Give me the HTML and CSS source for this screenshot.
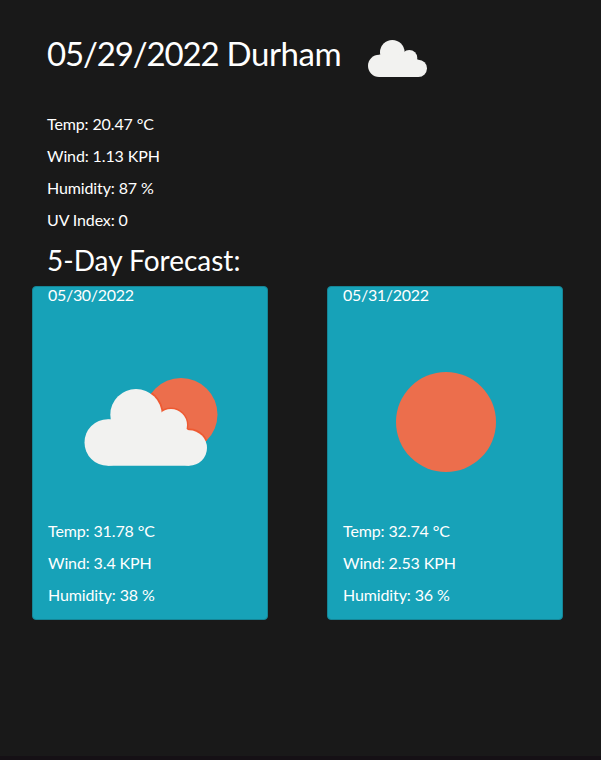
FILE: index.html
```html
<!DOCTYPE html>
<html lang="en">
<head>
<meta charset="utf-8">
<title>Weather</title>
<link rel="stylesheet" href="styles.css">
</head>
<body>
<main class="page">
  <section class="current">
    <header class="heading">
      <h1><span class="date">05/29/2022</span> Durham</h1>
      <svg class="cloud" viewBox="0 0 59 37" fill="#f2f2f0"><circle cx="11.100" cy="25.800" r="11.100"/><circle cx="24.300" cy="12.300" r="12.300"/><circle cx="41.300" cy="18" r="8"/><circle cx="50.400" cy="28.300" r="8.600"/><path d="M11 36.900V14.800h13.300L41.300 14l9.100 6v16.900z"/></svg>
    </header>
    <p>Temp: 20.47 °C</p>
    <p>Wind: 1.13 KPH</p>
    <p>Humidity: 87 %</p>
    <p>UV Index: 0</p>
  </section>
  <h2>5-Day Forecast:</h2>
  <section class="forecast">
    <article class="card">
      <h3>05/30/2022</h3>
      <svg class="icon" viewBox="0 0 202 202">
        <clipPath id="sun"><circle cx="133" cy="93.500" r="36.500"/></clipPath>
        <circle cx="133" cy="93.500" r="36.500" fill="#ec6e4c"/>
        <g clip-path="url(#sun)" fill="none" stroke="#ee5a32" stroke-width="3"><circle cx="88" cy="93.700" r="26"/><circle cx="123" cy="104" r="16"/><circle cx="141.300" cy="127" r="18"/></g>
        <g fill="#f2f2f0"><circle cx="59.700" cy="121.500" r="23.200"/><circle cx="88" cy="93.700" r="25.700"/><circle cx="123" cy="104" r="16"/><circle cx="141.300" cy="127" r="17.700"/><path d="M59.700 144.700V98.500H88L123 96l18.300 14v34.700z"/></g>
      </svg>
      <p>Temp: 31.78 °C</p>
      <p>Wind: 3.4 KPH</p>
      <p>Humidity: 38 %</p>
    </article>
    <article class="card">
      <h3>05/31/2022</h3>
      <svg class="icon" viewBox="0 0 202 202"><circle cx="103" cy="101" r="50" fill="#ec6e4c"/></svg>
      <p>Temp: 32.74 °C</p>
      <p>Wind: 2.53 KPH</p>
      <p>Humidity: 36 %</p>
    </article>
  </section>
</main>
</body>
</html>
```
FILE: styles.css
```css
* { box-sizing: border-box; }
body { margin: 0; background: #191919; color: #fff; font: 16px/24px Lato, sans-serif; letter-spacing: -0.12px; }
.page { height: 760px; padding: 34px 38px 0 32px; border-bottom: 4px solid #151015; }
.current { padding-left: 15px; }
.heading { display: flex; height: 78px; }
h1 { width: 293px; margin: 0; font-size: 33px; line-height: 39px; font-weight: 400; letter-spacing: -0.4px; white-space: nowrap; }
.date { letter-spacing: -1.15px; }
.cloud { width: 59px; height: 37px; margin: 6px 0 0 28px; }
p { margin: 0 0 8px; }
h2 { margin: 10px 0 8px 15px; font-size: 28px; line-height: 36px; font-weight: 400; letter-spacing: 0; }
.forecast { display: flex; justify-content: space-between; }
.card { width: 236px; height: 334px; padding: 0 15px; background: #17a2b8; border: 1px solid #158596; border-radius: 4px; }
h3 { margin: -2px 0 0; font-size: 16px; line-height: 19px; font-weight: 400; letter-spacing: -0.3px; }
.icon { display: block; width: 202px; height: 202px; margin: 17px 0 -4px; }
```
